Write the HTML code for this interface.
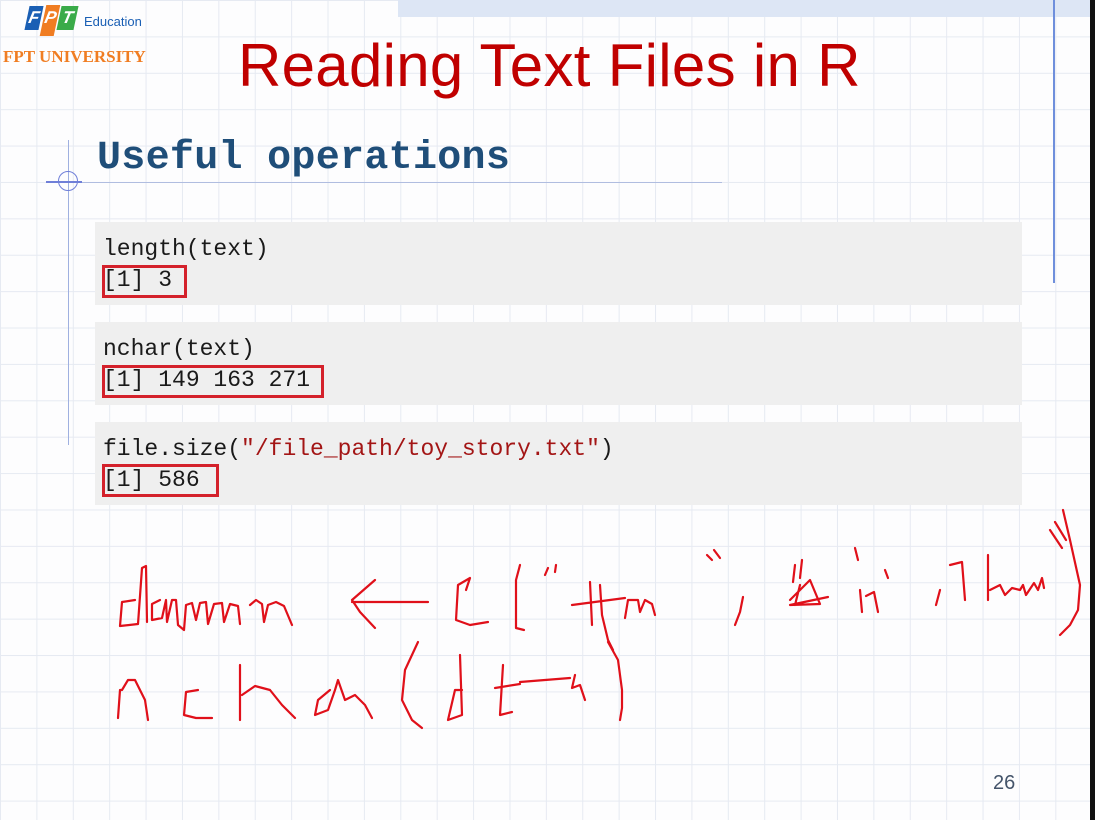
<!DOCTYPE html>
<html><head><meta charset="utf-8"><style>
*{margin:0;padding:0;box-sizing:border-box}
body{width:1095px;height:820px;overflow:hidden;position:relative;background:#fdfdfe;font-family:"Liberation Sans",sans-serif;
background-image:linear-gradient(to right,#e6eaf2 1px,transparent 1px),linear-gradient(to bottom,#e6eaf2 1px,transparent 1px);background-size:36.4px 36.4px;}
.abs{position:absolute}
.code{position:absolute;left:95px;width:927px;height:83px;background:#efefef;font-family:"Liberation Mono",monospace;font-size:23px;color:#1a1a1a;padding:12px 0 0 8px;line-height:31px}
.rb{position:absolute;border:3px solid #d4212b}
.s{color:#a31515}
.lg{position:absolute;color:#fff;font-weight:bold;font-size:17px;font-style:italic;text-align:center}
</style></head><body>
<div class="abs" style="left:398px;top:0;width:692px;height:17px;background:#dde6f5"></div>
<div class="abs" style="left:1090px;top:0;width:5px;height:820px;background:#111"></div>
<div class="abs" style="left:1053px;top:0;width:2px;height:283px;background:#6f8fdc"></div>
<!-- logo -->
<div class="lg" style="left:27px;top:6px;width:14px;height:24px;background:#1a5fb4;transform:skewX(-12deg);line-height:24px">F</div>
<div class="lg" style="left:43px;top:5px;width:14px;height:31px;background:#f07d22;transform:skewX(-12deg);line-height:26px">P</div>
<div class="lg" style="left:59px;top:6px;width:17px;height:24px;background:#3aab49;transform:skewX(-12deg);line-height:24px">T</div>
<div class="abs" style="left:84px;top:14px;font-size:13px;color:#1a5fb4">Education</div>
<div class="abs" style="left:3px;top:47px;font-family:'Liberation Serif',serif;font-weight:bold;font-size:17px;color:#f07d22">FPT UNIVERSITY</div>
<div class="abs" style="left:238px;top:31px;font-size:60px;color:#c00000;letter-spacing:0.3px;white-space:nowrap">Reading Text Files in R</div>
<div class="abs" style="left:97px;top:136px;font-family:'Liberation Mono',monospace;font-weight:bold;font-size:40px;color:#1f4e79;letter-spacing:0.3px">Useful operations</div>
<div class="abs" style="left:60px;top:182px;width:662px;height:1px;background:#b0bde0"></div>
<div class="abs" style="left:68px;top:140px;width:1px;height:305px;background:#9fb0e0"></div>
<div class="abs" style="left:58px;top:171px;width:20px;height:20px;border:1.5px solid #6f7fd8;border-radius:50%"></div>
<div class="abs" style="left:46px;top:181px;width:36px;height:1.5px;background:#6f7fd8"></div>
<div class="code" style="top:222px">length(text)<br>[1] 3</div>
<div class="code" style="top:322px">nchar(text)<br>[1] 149 163 271</div>
<div class="code" style="top:422px">file.size(<span class="s">"/file_path/toy_story.txt"</span>)<br>[1] 586</div>
<div class="rb" style="left:102px;top:265px;width:85px;height:33px"></div>
<div class="rb" style="left:102px;top:365px;width:222px;height:33px"></div>
<div class="rb" style="left:102px;top:464px;width:117px;height:33px"></div>
<div class="abs" style="left:993px;top:772px;font-size:20px;color:#44546a">26</div>
<svg class="abs" style="left:0;top:0" width="1095" height="820" fill="none" stroke="#e0101a" stroke-width="2.2" stroke-linejoin="round" stroke-linecap="round">
<path d="M135,600 L122,602 L120,626 L138,624 L142,568 L146,566 L147,622"/>
<path d="M160,600 L152,604 L152,620 L162,618 L166,600 L167,622 L172,600 L176,600 L178,625 L184,630 L186,605 L192,603 L196,620 L200,603 L206,602 L208,624 L214,604 L222,603 L224,622 L230,604 L238,606 L240,624"/>
<path d="M250,605 L256,600 L262,604 L264,622 L268,605 L276,602 L284,606 L292,625"/>
<path d="M375,580 L352,600 L360,612 L375,628 M352,602 L428,602"/>
<path d="M470,578 L458,585 L456,620 L470,625 L488,622 M470,578 L466,590"/>
<path d="M520,565 L516,580 L516,628 L524,630"/>
<path d="M548,568 L545,575 M556,565 L555,572 M590,582 L592,625 M600,585 L602,615 L608,640 L613,650 M572,605 L625,598 M625,618 L628,600 L638,600 L640,612 L645,600 L652,604 L655,615"/>
<path d="M707,555 L712,560 M714,550 L720,558 M743,597 L740,612 L735,625"/>
<path d="M795,565 L793,582 M802,560 L800,578 M790,600 L810,580 L820,604 L790,605 L828,597 M800,585 L795,605 M855,548 L858,560 M860,590 L862,612 M866,596 L874,592 L878,612 M885,570 L888,578"/>
<path d="M940,590 L936,605 M950,565 L962,562 L965,600 M988,555 L988,600 M990,590 L1000,585 L1005,595 L1012,588 L1020,590 L1023,585 L1026,595 L1034,583 L1038,590 L1042,578 L1044,588"/>
<path d="M1050,530 L1062,548 M1055,522 L1066,540 M1063,510 L1070,540 L1080,585 L1078,610 L1070,625 L1060,635"/>
<path d="M118,718 L120,690 L122,690 L128,680 L135,680 L145,700 L148,720"/>
<path d="M198,690 L186,692 L184,715 L196,718 L212,718"/>
<path d="M240,665 L240,720 M242,695 L255,686 L270,690 L282,705 L295,718"/>
<path d="M330,690 L318,700 L315,715 L328,710 L335,690 L338,680 L345,700 L355,695 L365,705 L372,718"/>
<path d="M418,642 L405,670 L402,700 L412,720 L422,728"/>
<path d="M460,655 L462,715 L448,720 L455,690 L462,690"/>
<path d="M503,665 L500,715 L512,712 M495,688 L520,684 M520,682 L570,678 M575,675 L572,688 L580,685 L585,700 M608,642 L618,660 L622,690 L622,708 L620,720"/>
</svg>
</body></html>
